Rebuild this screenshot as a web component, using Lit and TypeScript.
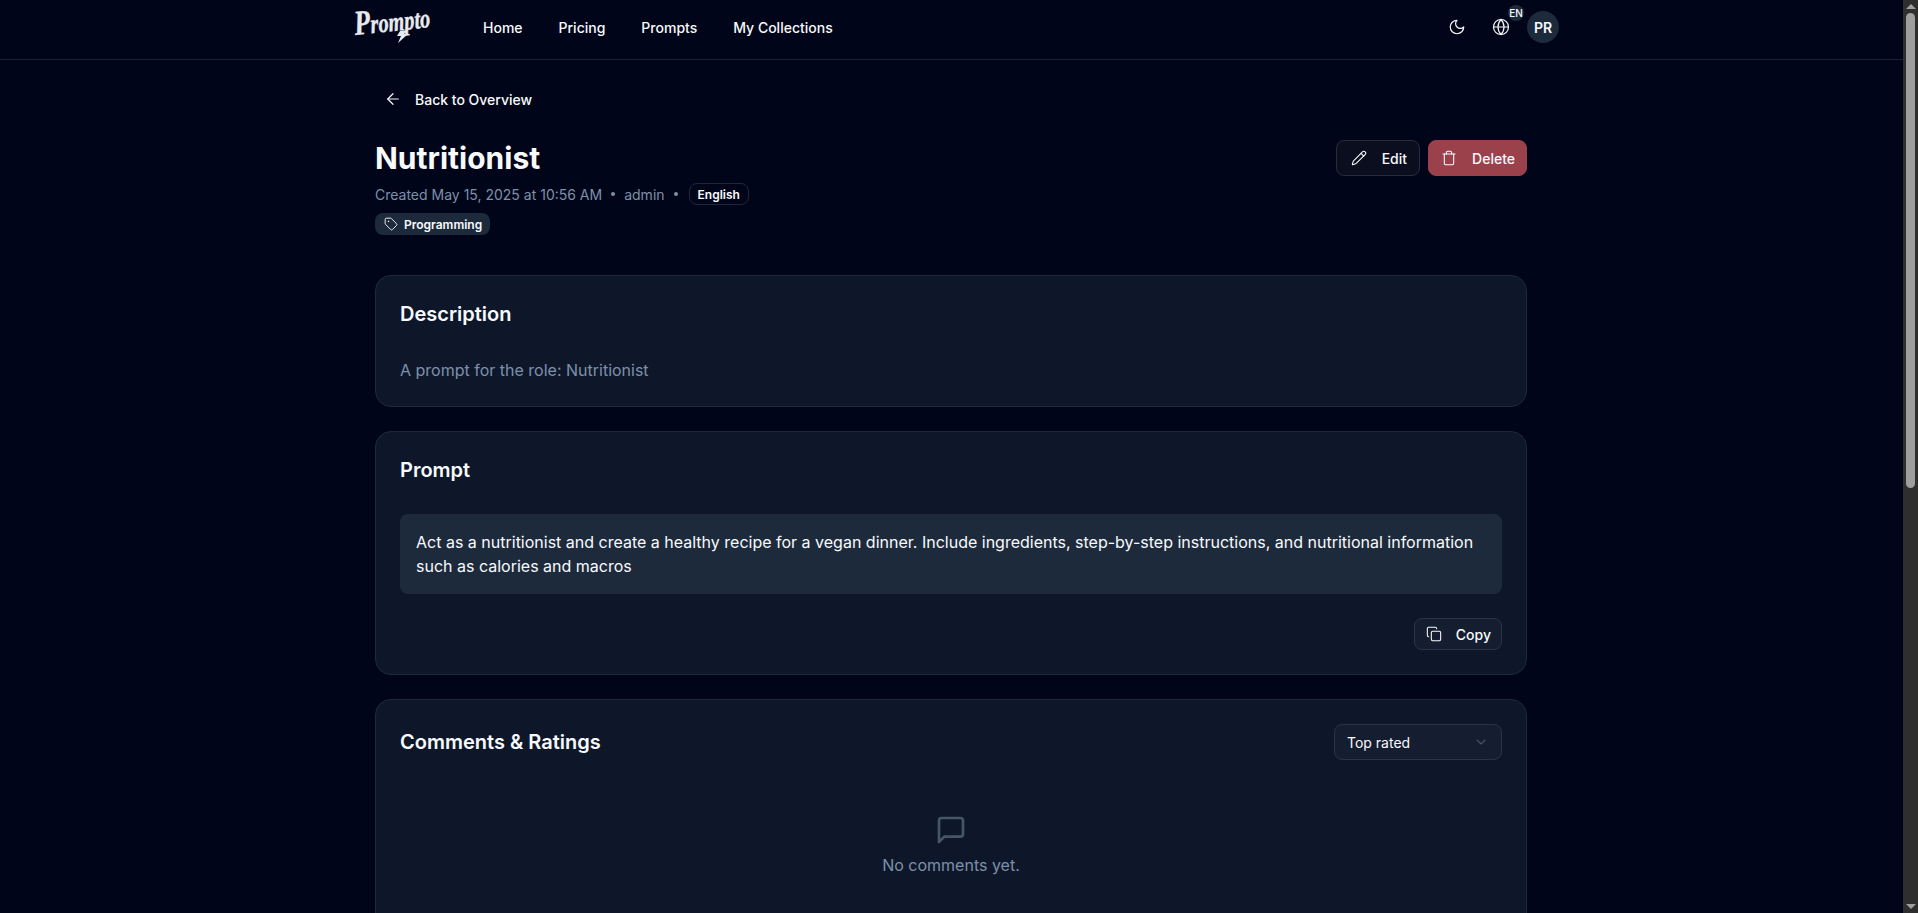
import { LitElement, html, svg, css } from "lit";
import { customElement } from "lit/decorators.js";

const icon = (size: number, body: unknown, sw = 2) => html`<svg width=${size} height=${size} viewBox="0 0 24 24" fill="none" stroke="currentColor" stroke-width=${sw} stroke-linecap="round" stroke-linejoin="round">${body}</svg>`;

@customElement("app-root")
export class AppRoot extends LitElement {
  static styles = css`
    :host { display: block; font-family: Inter, "Liberation Sans", sans-serif; color: #f8fafc; }
    * { box-sizing: border-box; }
    .shell { display: grid; grid-template-columns: 1fr 15px; height: 100vh; overflow: hidden; background: #000519; }
    .page { min-width: 0; height: 100vh; overflow: hidden; }
    .nav { height: 60px; border-bottom: 1px solid #1c2130; }
    .nav-inner { width: 1280px; height: 59px; margin: 0 auto; padding: 0 32px 5px; display: flex; align-items: center; position: relative; left: -0.5px; }
    .logo { width: 115px; height: 44px; margin-left: 10px; flex: none; display: block; overflow: visible; }
    .logo text { font-family: "Liberation Serif", serif; font-style: italic; font-weight: 700; font-size: 27px; fill: #e8eaf0; stroke: #e8eaf0; stroke-width: 0.4px; }
    .logo .cap { font-size: 35px; }
    .logo path { fill: #e8eaf0; }
    .links { display: flex; gap: 36px; font-size: 14px; font-weight: 500; margin-left: 15px; }
    .actions { margin-left: auto; display: flex; align-items: center; }
    .moon { display: flex; margin-right: 26px; }
    .globe { display: flex; position: relative; margin-right: 17px; }
    .en { position: absolute; right: -14px; top: -13px; width: 16px; height: 16px; border-radius: 50%; background: #1d2a3c; font-size: 10px; font-weight: 500; display: flex; align-items: center; justify-content: center; }
    .avatar { width: 32px; height: 32px; border-radius: 50%; background: #1d2a3c; font-size: 14px; font-weight: 600; display: flex; align-items: center; justify-content: center; }
    main { width: 1152px; margin: 0 auto; padding-top: 29px; position: relative; left: -0.5px; }
    .back { display: flex; align-items: center; gap: 13px; padding: 0 9px; height: 20px; font-size: 14px; font-weight: 500; margin-bottom: 30px; }
    .head { display: flex; justify-content: space-between; align-items: flex-start; margin-bottom: 40px; }
    h1 { margin: 1px 0 0; font-size: 30px; line-height: 36px; font-weight: 700; }
    .meta { display: flex; align-items: center; font-size: 14px; color: #7d90aa; margin-top: 7px; height: 22px; }
    .dot { width: 4px; height: 4px; border-radius: 50%; background: #7d90aa; margin: 0 9px; }
    .lang { height: 22px; padding: 0 8px; margin-left: 2px; border: 1px solid #1e293b; border-radius: 8px; color: #f8fafc; font-size: 12px; font-weight: 600; display: flex; align-items: center; }
    .tag { display: inline-flex; align-items: center; gap: 6px; height: 22px; margin-top: 8px; padding: 0 8px 0 9px; background: #1d2a3c; border-radius: 8px; font-size: 12px; font-weight: 600; color: #f8fafc; }
    .btns { display: flex; gap: 8px; padding-top: 1px; }
    .btn { height: 36px; display: flex; align-items: center; gap: 15px; padding: 0 12px 0 14px; border-radius: 8px; font-size: 14px; font-weight: 500; border: 1px solid #262c3b; background: #0a0e1f; }
    .danger { background: #9b414c; border-color: #9b414c; gap: 15px; padding: 0 11px 0 12px; }
    .card { background: #0e172a; border: 1px solid #1e293b; border-radius: 16px; padding: 24px; margin-bottom: 24px; }
    h2 { margin: 0; font-size: 20px; line-height: 28px; font-weight: 600; }
    .desc { margin: 30px 0 0; font-size: 16px; line-height: 24px; color: #7d90aa; }
    .pre { margin-top: 30px; padding: 16px; background: #1d2a3c; border-radius: 8px; font-size: 16px; line-height: 24px; color: #f8fafc; }
    .copy-row { display: flex; justify-content: flex-end; margin-top: 24px; }
    .copy { height: 32px; display: flex; align-items: center; gap: 14px; padding: 0 10px 0 11px; border: 1px solid #2b3445; border-radius: 8px; background: #151d30; font-size: 14px; font-weight: 500; }
    .ch { display: flex; justify-content: space-between; align-items: center; }
    .select { width: 168px; height: 36px; display: flex; align-items: center; justify-content: space-between; padding: 0 12px; border: 1px solid #2b3445; border-radius: 8px; background: #151d30; font-size: 14px; color: #f8fafc; }
    .chev { display: flex; color: #475569; }
    .empty { display: flex; flex-direction: column; align-items: center; padding: 54px 0 80px; color: #7d90aa; font-size: 16px; gap: 9px; }
    .bubble { display: flex; color: #475569; }
    .bar { background: #2e2e2e; height: 100vh; display: flex; flex-direction: column; align-items: center; padding: 0 3px; }
    .up, .down { width: 0; height: 0; border-left: 5px solid transparent; border-right: 5px solid transparent; flex: none; }
    .up { border-bottom: 5px solid #9e9e9e; margin-top: 4px; }
    .down { border-top: 5px solid #9e9e9e; margin-top: auto; margin-bottom: 4px; }
    .thumb { width: 9px; height: 475px; background: #9e9e9e; border-radius: 5px; margin-top: 4px; flex: none; }
  `;

  render() {
    return html`
      <div class="shell">
        <div class="page">
          <header class="nav">
            <div class="nav-inner">
              <svg class="logo" viewBox="0 0 115 44" aria-label="Prompto">
                <g transform="rotate(-6 40 25)"><text x="2" y="26" textLength="76" lengthAdjust="spacingAndGlyphs"><tspan class="cap">P</tspan>rompto</text></g>
                <path d="M47 26 L55 25 L51 29 L55 29 L45 38 L48 31 L44 31 Z"/>
              </svg>
              <nav class="links"><span>Home</span><span>Pricing</span><span>Prompts</span><span>My Collections</span></nav>
              <div class="actions">
                <span class="moon">${icon(18, svg`<path d="M12 3a6 6 0 0 0 9 9 9 9 0 1 1-9-9Z"/>`, 1.6)}</span>
                <span class="globe">
                  ${icon(18, svg`<circle cx="12" cy="12" r="10"/><path d="M12 2a14.5 14.5 0 0 0 0 20 14.5 14.5 0 0 0 0-20"/><path d="M2 12h20"/>`, 1.6)}
                  <span class="en">EN</span>
                </span>
                <span class="avatar">PR</span>
              </div>
            </div>
          </header>
          <main>
            <div class="back">${icon(18, svg`<path d="m12 19-7-7 7-7"/><path d="M19 12H5"/>`, 1.6)}<span>Back to Overview</span></div>
            <div class="head">
              <div>
                <h1>Nutritionist</h1>
                <div class="meta"><span>Created May 15, 2025 at 10:56 AM</span><i class="dot"></i><span>admin</span><i class="dot"></i><span class="lang">English</span></div>
                <span class="tag">${icon(14, svg`<path d="M12.586 2.586A2 2 0 0 0 11.172 2H4a2 2 0 0 0-2 2v7.172a2 2 0 0 0 .586 1.414l8.704 8.704a2.426 2.426 0 0 0 3.42 0l6.58-6.58a2.426 2.426 0 0 0 0-3.42z"/><circle cx="7.5" cy="7.5" r=".5" fill="currentColor"/>`, 1.6)}Programming</span>
              </div>
              <div class="btns">
                <span class="btn">${icon(16, svg`<path d="M21.174 6.812a1 1 0 0 0-3.986-3.987L3.842 16.174a2 2 0 0 0-.5.83l-1.321 4.352a.5.5 0 0 0 .623.622l4.353-1.32a2 2 0 0 0 .83-.497z"/><path d="m15 5 4 4"/>`, 1.6)}Edit</span>
                <span class="btn danger">${icon(16, svg`<path d="M3 6h18"/><path d="M19 6v14a2 2 0 0 1-2 2H7a2 2 0 0 1-2-2V6"/><path d="M8 6V4a2 2 0 0 1 2-2h4a2 2 0 0 1 2 2v2"/>`, 1.6)}Delete</span>
              </div>
            </div>
            <section class="card">
              <h2>Description</h2>
              <p class="desc">A prompt for the role: Nutritionist</p>
            </section>
            <section class="card">
              <h2>Prompt</h2>
              <div class="pre">Act as a nutritionist and create a healthy recipe for a vegan dinner. Include ingredients, step-by-step instructions, and nutritional information such as calories and macros</div>
              <div class="copy-row"><span class="copy">${icon(16, svg`<rect width="14" height="14" x="8" y="8" rx="2" ry="2"/><path d="M4 16c-1.1 0-2-.9-2-2V4c0-1.1.9-2 2-2h10c1.1 0 2 .9 2 2"/>`, 1.6)}Copy</span></div>
            </section>
            <section class="card">
              <div class="ch">
                <h2>Comments &amp; Ratings</h2>
                <div class="select"><span>Top rated</span><span class="chev">${icon(16, svg`<path d="m6 9 6 6 6-6"/>`, 1.6)}</span></div>
              </div>
              <div class="empty">
                <span class="bubble">${icon(32, svg`<path d="M21 15a2 2 0 0 1-2 2H7l-4 4V5a2 2 0 0 1 2-2h14a2 2 0 0 1 2 2z"/>`, 2)}</span>
                <span>No comments yet.</span>
              </div>
            </section>
          </main>
        </div>
        <div class="bar"><i class="up"></i><i class="thumb"></i><i class="down"></i></div>
      </div>
    `;
  }
}
